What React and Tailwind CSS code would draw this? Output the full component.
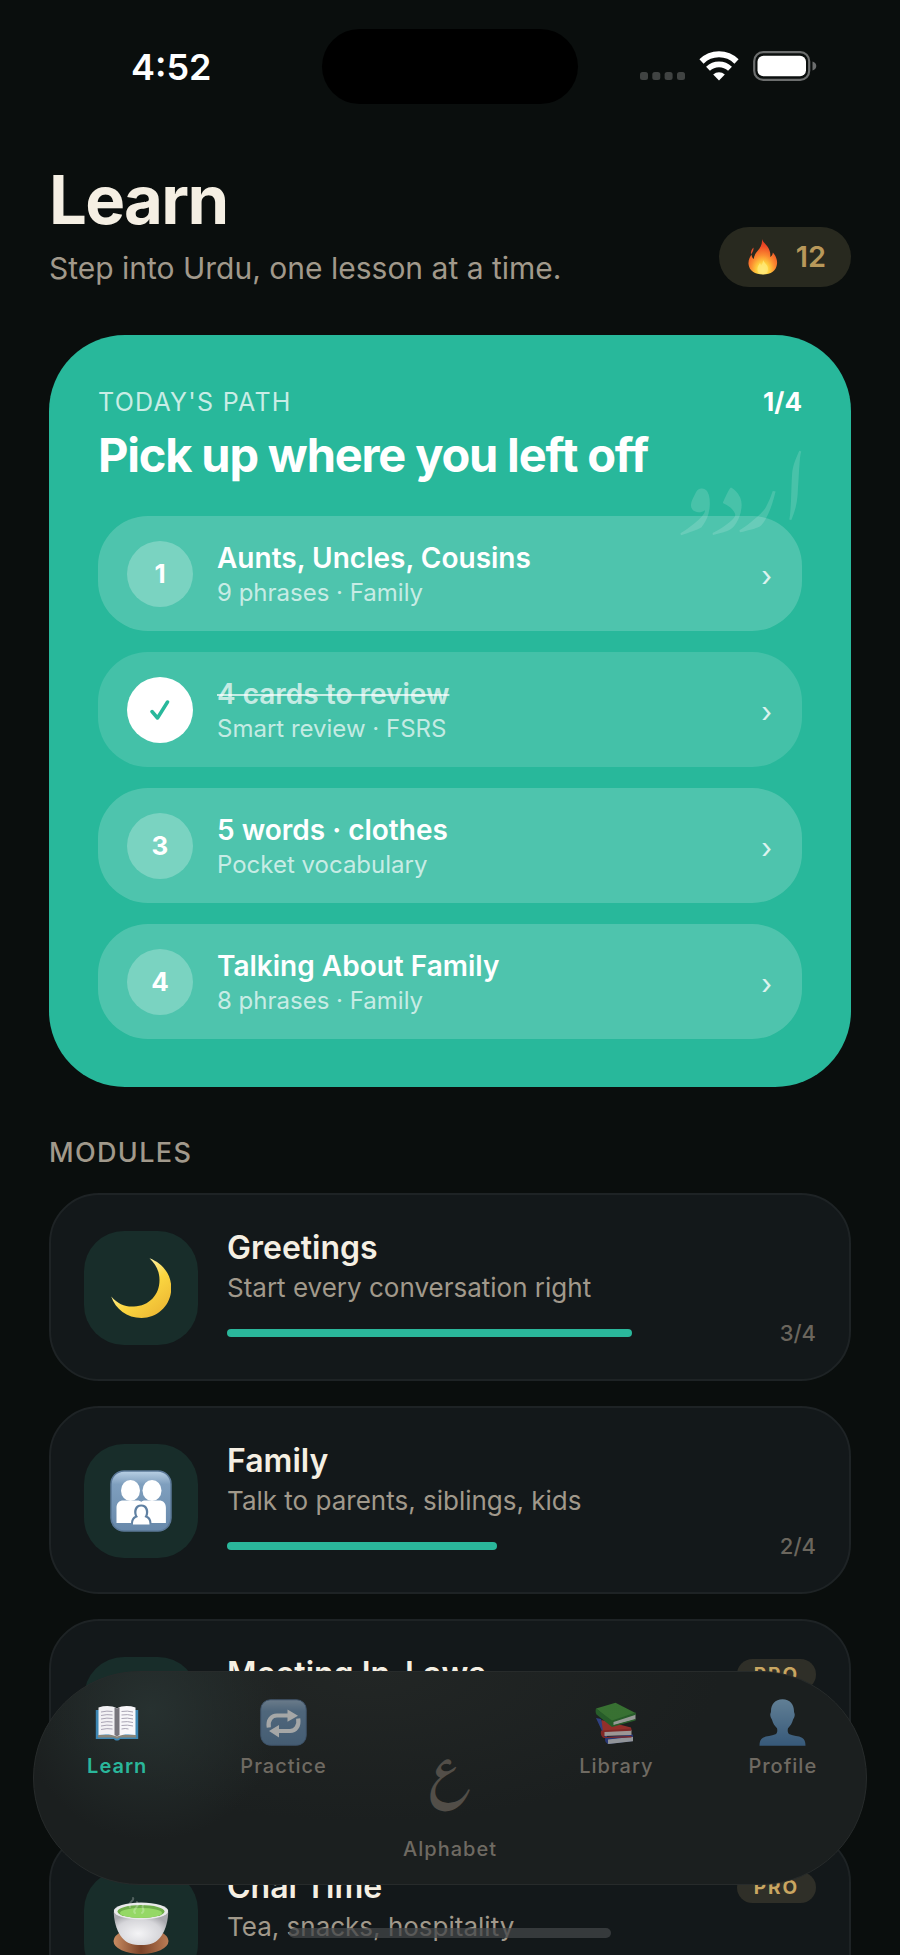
const paths = [
  { n: 1, title: 'Aunts, Uncles, Cousins', sub: '9 phrases · Family' },
  { n: 2, title: '4 cards to review', sub: 'Smart review · FSRS', done: true },
  { n: 3, title: '5 words · clothes', sub: 'Pocket vocabulary' },
  { n: 4, title: 'Talking About Family', sub: '8 phrases · Family' },
];

const modules = [
  { title: 'Greetings', sub: 'Start every conversation right', Icon: Moon, done: 3, total: 4 },
  { title: 'Family', sub: 'Talk to parents, siblings, kids', Icon: FamilySign, done: 2, total: 4 },
  { title: 'Meeting In-Laws', sub: '', Icon: null, pro: true },
  { title: 'Chai Time', sub: 'Tea, snacks, hospitality', Icon: Tea, pro: true },
];

const tabs = [
  { label: 'Learn', Icon: OpenBook, active: true },
  { label: 'Practice', Icon: Repeat },
  { label: 'Alphabet', glyph: 'ع' },
  { label: 'Library', Icon: Books },
  { label: 'Profile', Icon: Person },
];

function Flame() {
  return (
    <svg viewBox="0 0 30 36" className="h-9 w-[30px]" aria-hidden="true">
      <defs>
        <radialGradient id="fl" cx="50%" cy="88%" r="85%">
          <stop offset="0" stopColor="#fff3a0" />
          <stop offset=".25" stopColor="#ffd23e" />
          <stop offset=".5" stopColor="#fb8b30" />
          <stop offset=".8" stopColor="#ee4a26" />
          <stop offset="1" stopColor="#d93a20" />
        </radialGradient>
      </defs>
      <path d="M14 0c1 4 7 7 8 13 .5 2 .3 4 .3 5 1.500-1 2.400-2.600 2.600-4.500C28 17 29.500 21 29 25c-.7 6.500-6 10.500-14 10.500S1 31.500.5 25C.2 21 2 18 3.500 15.500c.3 2 1 3.500 2.200 4.500C6 17.500 7 15 9.500 12 12.500 8.500 14.500 5 14 0z" fill="url(#fl)" />
      <path d="M5.500 8.500c-2 2-3 4.500-2.500 7 1-1.500 1.700-2.500 2.200-4 .3-1 .4-2 .3-3z" fill="#e2502c" />
      <path d="M15 21c1 3 5 4.500 5 9 0 3.500-2 5.200-5 5.200S9.500 33.500 9.500 30c0-3 1.500-4 2.500-6 .6 1 .8 1.700 1 2.500 1.500-1.500 2-3.500 2-5.500z" fill="#ffe873" opacity=".85" />
    </svg>
  );
}

function Moon() {
  return (
    <svg viewBox="0 0 60 60" className="size-[60px]" aria-hidden="true">
      <defs>
        <linearGradient id="mo" x1=".3" y1=".3" x2=".8" y2=".9">
          <stop offset="0" stopColor="#fff0a0" />
          <stop offset=".45" stopColor="#fbd640" />
          <stop offset="1" stopColor="#eebb35" />
        </linearGradient>
      </defs>
      <path d="M38.500.3C51 5 60.500 16 60.300 30.500 60 47 47 60 30.500 60 16 60 4.500 51 .2 38.500 7 46 14 49 23 48.500 38 48 48.500 37 48.500 22 48.500 13.500 45 6.500 38.500.3z" fill="url(#mo)" />
    </svg>
  );
}

function FamilySign() {
  return (
    <svg viewBox="0 0 62 62" className="size-[62px]" aria-hidden="true">
      <defs>
        <linearGradient id="fa" x1="0" y1="0" x2="0" y2="1">
          <stop offset="0" stopColor="#b9d0e4" />
          <stop offset=".22" stopColor="#7f9fbe" />
          <stop offset="1" stopColor="#6788aa" />
        </linearGradient>
      </defs>
      <rect x="1" y="1" width="60" height="60" rx="13" fill="url(#fa)" stroke="#5b7897" strokeWidth="1.500" />
      <g fill="#fff">
        <ellipse cx="20.500" cy="20.500" rx="9.500" ry="10.500" />
        <ellipse cx="42" cy="20.500" rx="9.500" ry="10.500" />
        <path d="M6.500 53V38c0-5 2.500-7.500 7-7.500h14c1.500 0 3 .5 3.700 1.500.7-1 2.200-1.500 3.700-1.500h14c4.500 0 7 2.500 7 7.500v15z" />
      </g>
      <path d="M21 53.500c0-4 1.500-6.500 4-7.500-2-5-.5-11.500 6.200-11.500S39.500 41 37.500 46c2.500 1 4 3.500 4 7.500z" fill="#5f80a2" />
      <path d="M23 54.500c0-4.500 1.500-6.500 5-7.500-3-4-1.500-10.500 3.200-10.500S37.500 43 34.500 47c3.500 1 5 3 5 7.500z" fill="#fff" />
    </svg>
  );
}

function Tea() {
  return (
    <svg viewBox="0 0 56 60" className="h-[60px] w-14" aria-hidden="true">
      <defs>
        <linearGradient id="sa" x1="0" y1="0" x2="1" y2="0">
          <stop offset="0" stopColor="#c98c62" />
          <stop offset=".5" stopColor="#7b4328" />
          <stop offset="1" stopColor="#bb7c55" />
        </linearGradient>
        <radialGradient id="cu" cx="45%" cy="65%" r="60%">
          <stop offset="0" stopColor="#f4f4f6" />
          <stop offset=".7" stopColor="#d6d6da" />
          <stop offset="1" stopColor="#a9a9ae" />
        </radialGradient>
      </defs>
      <ellipse cx="28" cy="44" rx="27.500" ry="13" fill="url(#sa)" />
      <path d="M.8 15C1 29 7 43 17 46.500c6 2 16 2 22 0C49 43 55 29 55.200 15z" fill="url(#cu)" />
      <ellipse cx="28" cy="14" rx="27.200" ry="8.500" fill="#e9e9ea" />
      <ellipse cx="28" cy="14.500" rx="23.500" ry="6.500" fill="#6fae4a" />
      <ellipse cx="28" cy="16" rx="21" ry="5" fill="#95d866" />
      <path d="M22 16c-4-4 6-6 2-11M17 10c-3-5 5-6 3-9M29 16c4-3-1-5 1-8" fill="none" stroke="#fff" strokeOpacity=".25" strokeWidth="2" strokeLinecap="round" />
    </svg>
  );
}

function OpenBook() {
  return (
    <svg viewBox="0 0 44 36" className="h-9 w-11" aria-hidden="true">
      <path d="M.8 5h42.400v29H25c-1 2-5 2-6 0H.8z" fill="#3d86b3" />
      <path d="M3 30h38v2.500H25c-1.500 1.500-4.500 1.500-6 0H3z" fill="#8a8578" />
      <path d="M3.500 2.500C10 .5 17 .5 22 3.500v28C17 29 9 29 3.500 30z" fill="#f2f1f4" />
      <path d="M40.500 2.500C34 .5 27 .5 22 3.500v28c5-2.500 13-2.500 18.500-1.500z" fill="#f8f7fa" />
      <path d="M19.500 2.500c1 .3 1.800.6 2.500 1 .7-.4 1.500-.7 2.500-1V30c-1 .4-1.800.8-2.500 1.500-.7-.7-1.500-1.100-2.500-1.500z" fill="#77757c" />
      <g stroke="#a9a4b4" strokeWidth="1">
        <path d="M6 7q6-1.500 11.500-.5M6 10.500q6-1.500 11.500-.5M6 14q6-1.500 11.500-.5M6 17.500q6-1.500 11.500-.5M6 21q6-1.500 11.500-.5M6 24.500q6-1.500 11.500-.5" fill="none" />
        <path d="M26.500 6.500q6-1 11.500.5M26.500 10q6-1 11.500.5M26.500 13.500q6-1 11.500.5M26.500 17q6-1 11.500.5M26.500 20.500q6-1 11.500.5M26.500 24q4-1 7 0" fill="none" />
      </g>
    </svg>
  );
}

function Repeat() {
  return (
    <svg viewBox="0 0 47 47" className="size-[47px]" aria-hidden="true">
      <defs>
        <linearGradient id="re" x1="0" y1="0" x2="0" y2="1">
          <stop offset="0" stopColor="#9db6cf" />
          <stop offset=".25" stopColor="#6f93b6" />
          <stop offset="1" stopColor="#5f84a9" />
        </linearGradient>
      </defs>
      <rect x=".8" y=".8" width="45.400" height="45.400" rx="9.500" fill="url(#re)" stroke="#54749a" />
      <g fill="none" stroke="#fff" strokeWidth="4.200">
        <path d="M8.800 28.500C7.500 21 11.500 16.500 17 16.500h11" />
        <path d="M38.200 19.500C39.500 27 35.500 32 30 32H18" />
      </g>
      <path d="M27.500 10.500l10.500 6.200-10.500 6z M19 26l-10 6 10 6.500z" fill="#fff" />
    </svg>
  );
}

function Books() {
  return (
    <svg viewBox="0 0 42 42" className="size-[42px]" aria-hidden="true">
      <path d="M1 16l5 1 7 20 25-2v4l-25 3z" fill="#3c55c0" />
      <path d="M12.500 37L38 34.500v4.700L13.500 42C11.500 41 11.500 38.500 12.500 37z" fill="#dfe1ea" />
      <path d="M11.500 35l26.500-2.500v2.200L13 37.500v4.300C10 41 9 36.500 11.500 35z" fill="#2f46ae" />
      <path d="M6.500 18l29.500 7.500v2.500L8 30z" fill="#e23a31" />
      <path d="M8.500 29.500L36.500 28v5L9.500 34c-2-1-2-3.500-1-4.500z" fill="#f1e5e3" />
      <path d="M6.500 28.500L36.500 26.500v2.300L9.500 30v5l27-1v1.500L9 36c-3-.5-4-6-2.500-7.500z" fill="#c42e2b" />
      <path d="M1 6.500L20.500.8 40.500 11 17 20z" fill="#4aa63e" />
      <path d="M17 19.500L40.500 12v5.500L18 23.500z" fill="#e6ebe4" />
      <path d="M1 6.500L17 18.500 40.800 10.500v2.200L18.500 20v3L40.500 17v1.500L17 25 1.500 12.500C.5 11 .3 8 1 6.500z" fill="#2f8530" />
    </svg>
  );
}

function Person() {
  return (
    <svg viewBox="0 0 47 47" className="size-[47px]" aria-hidden="true">
      <defs>
        <linearGradient id="pe" x1="0" y1="0" x2="0" y2="1">
          <stop offset="0" stopColor="#90bfe4" />
          <stop offset="1" stopColor="#4a80b6" />
        </linearGradient>
      </defs>
      <path d="M23.500.3c7.500 0 11.500 5 11.500 12 0 1.500.9 2 .7 4-.2 2.500-1.200 3-1.700 4.500-1 3.500-2.500 6-5 8.500-.7 2.500-.2 5 1.500 6 4 1.700 9 1.500 12.500 3.500 2.500 1.500 3.500 4 3.500 8H.5c0-4 1-6.500 3.500-8 3.500-2 8.500-1.800 12.500-3.500 1.700-1 2.200-3.500 1.500-6-2.500-2.500-4-5-5-8.500-.5-1.500-1.500-2-1.700-4.500-.2-2 .7-2.500.7-4 0-7 4-12 11.500-12z" fill="url(#pe)" />
    </svg>
  );
}

function StatusBar() {
  return (
    <div className="grid h-[132px] grid-cols-[1fr_256px_1fr] items-center">
      <time className="pt-0.5 pl-[131px] text-[36px] leading-10 font-semibold">4:52</time>
      <div className="h-[75px] rounded-full bg-black" />
      <div className="flex items-center justify-end gap-[14px] pr-[83px]">
        <svg viewBox="0 0 45 30" className="h-[30px] w-[45px]" fill="#404342" role="img" aria-label="No signal">
          <rect x="0" y="21" width="8" height="8" rx="2.500" />
          <rect x="12.300" y="21" width="8" height="8" rx="2.500" />
          <rect x="24.600" y="21" width="8" height="8" rx="2.500" />
          <rect x="37" y="21" width="8" height="8" rx="2.500" />
        </svg>
        <svg viewBox="0 0 40 30" className="h-[30px] w-10" fill="none" stroke="#fff" role="img" aria-label="Wi-Fi">
          <path d="M2.500 10.500a25 25 0 0 1 35 0" strokeWidth="6" />
          <path d="M9 17.800a16 16 0 0 1 22 0" strokeWidth="5.600" />
          <path d="M20 29.500l-5.800-6a8.300 8.300 0 0 1 11.600 0z" fill="#fff" stroke="none" />
        </svg>
        <svg viewBox="0 0 64 30" className="h-[30px] w-16" role="img" aria-label="Battery full">
          <rect x="1.200" y="1.200" width="55" height="27.600" rx="9" fill="none" stroke="#6c6e6e" strokeWidth="2.200" />
          <rect x="4.500" y="4.800" width="48.500" height="20.500" rx="6" fill="#fff" />
          <path d="M59.500 10.500c5 1.200 5 8 0 9z" fill="#6c6e6e" />
        </svg>
      </div>
    </div>
  );
}

function PathRow({ item }) {
  return (
    <li>
      <button
        type="button"
        className={
          'flex w-full items-center gap-6 rounded-[50px] py-[21px] pr-[30px] pl-[29px] text-left ' +
          (item.done ? 'bg-white/13' : 'bg-white/18')
        }
      >
        <span
          className={
            'flex size-[66px] shrink-0 items-center justify-center rounded-full text-[26px] font-bold ' +
            (item.done ? 'bg-white text-[#28b89b]' : 'bg-white/25 text-white')
          }
        >
          {item.done ? (
            <svg viewBox="0 0 20 20" className="size-5" fill="none" stroke="currentColor" strokeWidth="3.500" strokeLinecap="round" strokeLinejoin="round" role="img" aria-label="Done">
              <path d="M2 11.500l5.500 6.500L17.500 2" />
            </svg>
          ) : (
            item.n
          )}
        </span>
        <span className="min-w-0 flex-1 pt-[3px]">
          <span
            className={
              'block text-[28px] leading-9 font-semibold ' +
              (item.done ? 'text-white/70 line-through decoration-2' : 'text-white')
            }
          >
            {item.title}
          </span>
          <span className="block text-[24px] leading-[34px] text-white/70">{item.sub}</span>
        </span>
        <span className="pt-1 text-[28px] leading-9 text-white/80" aria-hidden="true">›</span>
      </button>
    </li>
  );
}

function ModuleCard({ item }) {
  const { Icon } = item;
  return (
    <li>
      <a href="#module" className="flex items-center gap-[29px] rounded-[50px] border-2 border-[#1e2325] bg-[#13181a] px-[33px] pt-[33px] pb-[31px]">
        <span className="flex size-[114px] shrink-0 items-center justify-center rounded-[40px] bg-[#182d2a]">
          {Icon && <Icon />}
        </span>
        <span className="min-w-0 flex-1">
          <span className="flex items-center justify-between">
            <span className="text-[32px] leading-10 font-semibold text-[#f5efe3]">{item.title}</span>
            {item.pro && (
              <span className="rounded-full bg-[#2f2f28] px-[17px] text-[19px] leading-[31px] font-bold tracking-widest text-[#c9a661]">
                PRO
              </span>
            )}
          </span>
          <span className="block h-10 text-[26px] leading-10 text-[#a1998b]">{item.sub}</span>
          <span className="mt-2.5 flex h-[30px] items-center gap-3 text-[22px] leading-[30px] font-medium text-[#6b665d]">
            {item.total && (
              <>
                <span className="h-2 flex-1 rounded-full">
                  <span
                    className="block h-full rounded-full bg-[#2ab79b]"
                    style={{ width: `${(item.done / item.total) * 100}%` }}
                  />
                </span>
                <span>{item.done}/{item.total}</span>
              </>
            )}
          </span>
        </span>
      </a>
    </li>
  );
}

function TabBar() {
  return (
    <nav className="absolute inset-x-[33px] bottom-[70px] grid grid-cols-5 items-start rounded-[107px] border border-[#272b2b] bg-[#1b1f1f] bg-[radial-gradient(circle_at_14%_18%,#273130_0,transparent_130px),radial-gradient(ellipse_at_40%_0%,#222625_0,transparent_50%)] pt-[27px] pb-[21px]">
      {tabs.map(({ label, Icon, glyph, active }) => (
        <a
          key={label}
          href={`#${label.toLowerCase()}`}
          aria-current={active ? 'page' : undefined}
          className={
            'flex flex-col items-center gap-1.5 text-[20px] leading-7 tracking-wider ' +
            (active ? 'font-semibold text-[#2ab79b]' : 'font-medium text-[#6f6a62]')
          }
        >
          {glyph ? (
            <span lang="ur" className="font-['Noto_Nastaliq_Urdu','DejaVu_Sans',serif] text-[48px] leading-[130px] font-normal tracking-normal text-[#524e48]">
              {glyph}
            </span>
          ) : (
            <span className={'flex h-[47px] items-center ' + (active ? '' : 'opacity-60')}>
              <Icon />
            </span>
          )}
          <span>{label}</span>
        </a>
      ))}
    </nav>
  );
}

export default function App() {
  return (
    <div className="relative h-screen overflow-hidden bg-[#0a0e0d] font-['Inter',sans-serif] text-white">
      <div className="h-full overflow-y-auto [scrollbar-width:none]">
        <StatusBar />
        <main className="px-[49px] pt-7 pb-[320px]">
          <header className="flex items-end justify-between">
            <div>
              <h1 className="text-[67px] leading-[80px] font-bold tracking-tight text-[#f5efe3]">Learn</h1>
              <p className="mt-[9px] text-[30px] leading-[38px] text-[#a1998b]">Step into Urdu, one lesson at a time.</p>
            </div>
            <div className="flex items-center gap-[18px] rounded-full bg-[#28291f] py-3 pr-[25px] pl-[29px]">
              <Flame />
              <span className="text-[29px] leading-9 font-semibold text-[#b8985a]">12</span>
            </div>
          </header>

          <section className="relative mt-12 rounded-[76px] bg-[#28b89b] px-[49px] pt-[50px] pb-12">
            <div className="flex items-center justify-between leading-[34px]">
              <p className="text-[25px] tracking-wider text-white/75">TODAY'S PATH</p>
              <p className="text-[26px] font-bold">1/4</p>
            </div>
            <h2 className="mt-1.5 text-[47px] leading-[60px] font-bold tracking-tight">Pick up where you left off</h2>
            <ul className="mt-[31px] flex flex-col gap-[21px]">
              {paths.map((p) => (
                <PathRow key={p.n} item={p} />
              ))}
            </ul>
            <span lang="ur" dir="rtl" aria-hidden="true" className="pointer-events-none absolute top-[26px] right-[41px] font-['Noto_Nastaliq_Urdu','DejaVu_Sans',serif] text-[90px] leading-[220px] text-white/15">
              اردو
            </span>
          </section>

          <h2 className="mt-[49px] text-[27px] leading-[34px] font-medium tracking-wider text-[#a1998b]">MODULES</h2>
          <ul className="mt-[23px] flex flex-col gap-[25px]">
            {modules.map((m) => (
              <ModuleCard key={m.title} item={m} />
            ))}
          </ul>
        </main>
      </div>
      <TabBar />
      <div className="absolute bottom-[17px] left-1/2 h-2.5 w-[322px] -translate-x-1/2 rounded-full bg-[#434548]/75" />
    </div>
  );
}
